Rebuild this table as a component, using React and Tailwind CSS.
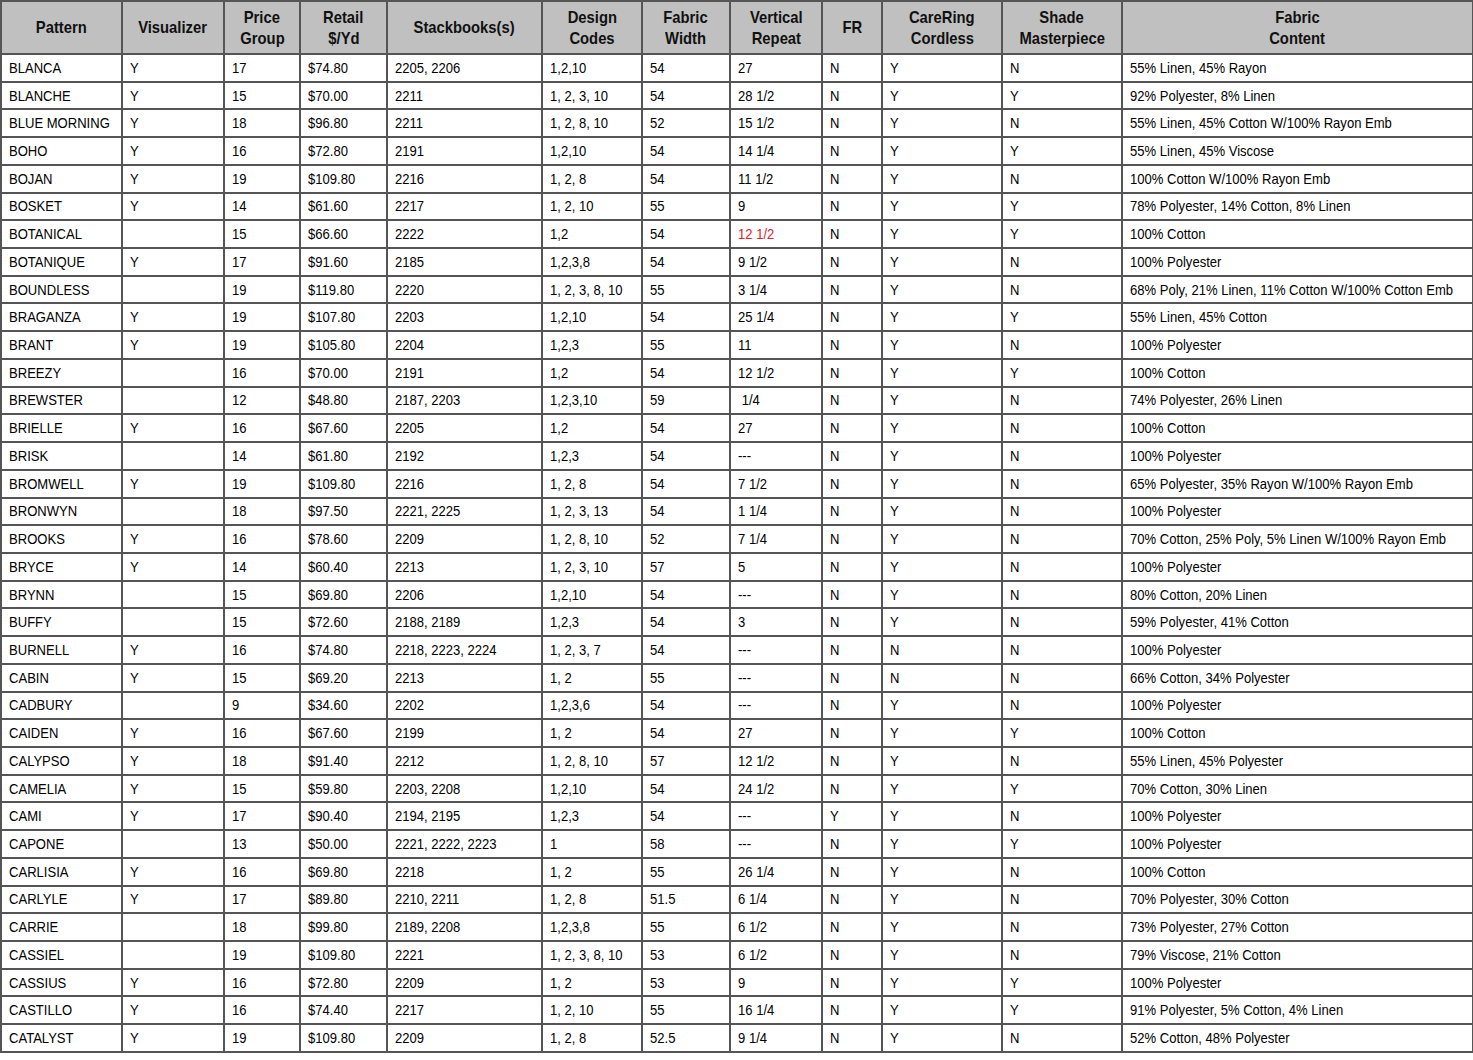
const columns = [
  { label: ['Pattern'], w: 'w-[121px]' },
  { label: ['Visualizer'], w: 'w-[102px]' },
  { label: ['Price', 'Group'], w: 'w-[76px]' },
  { label: ['Retail', '$/Yd'], w: 'w-[87px]' },
  { label: ['Stackbooks(s)'], w: 'w-[155px]' },
  { label: ['Design', 'Codes'], w: 'w-[100px]' },
  { label: ['Fabric', 'Width'], w: 'w-[88px]' },
  { label: ['Vertical', 'Repeat'], w: 'w-[92px]' },
  { label: ['FR'], w: 'w-[60px]' },
  { label: ['CareRing', 'Cordless'], w: 'w-[120px]' },
  { label: ['Shade', 'Masterpiece'], w: 'w-[120px]' },
  { label: ['Fabric', 'Content'], w: 'w-[351px]' },
];

const rows = `BLANCA|Y|17|$74.80|2205, 2206|1,2,10|54|27|N|Y|N|55% Linen, 45% Rayon
BLANCHE|Y|15|$70.00|2211|1, 2, 3, 10|54|28 1/2|N|Y|Y|92% Polyester, 8% Linen
BLUE MORNING|Y|18|$96.80|2211|1, 2, 8, 10|52|15 1/2|N|Y|N|55% Linen, 45% Cotton W/100% Rayon Emb
BOHO|Y|16|$72.80|2191|1,2,10|54|14 1/4|N|Y|Y|55% Linen, 45% Viscose
BOJAN|Y|19|$109.80|2216|1, 2, 8|54|11 1/2|N|Y|N|100% Cotton W/100% Rayon Emb
BOSKET|Y|14|$61.60|2217|1, 2, 10|55|9|N|Y|Y|78% Polyester, 14% Cotton, 8% Linen
BOTANICAL||15|$66.60|2222|1,2|54|12 1/2|N|Y|Y|100% Cotton
BOTANIQUE|Y|17|$91.60|2185|1,2,3,8|54|9 1/2|N|Y|N|100% Polyester
BOUNDLESS||19|$119.80|2220|1, 2, 3, 8, 10|55|3 1/4|N|Y|N|68% Poly, 21% Linen, 11% Cotton W/100% Cotton Emb
BRAGANZA|Y|19|$107.80|2203|1,2,10|54|25 1/4|N|Y|Y|55% Linen, 45% Cotton
BRANT|Y|19|$105.80|2204|1,2,3|55|11|N|Y|N|100% Polyester
BREEZY||16|$70.00|2191|1,2|54|12 1/2|N|Y|Y|100% Cotton
BREWSTER||12|$48.80|2187, 2203|1,2,3,10|59|\u00a01/4|N|Y|N|74% Polyester, 26% Linen
BRIELLE|Y|16|$67.60|2205|1,2|54|27|N|Y|N|100% Cotton
BRISK||14|$61.80|2192|1,2,3|54|---|N|Y|N|100% Polyester
BROMWELL|Y|19|$109.80|2216|1, 2, 8|54|7 1/2|N|Y|N|65% Polyester, 35% Rayon W/100% Rayon Emb
BRONWYN||18|$97.50|2221, 2225|1, 2, 3, 13|54|1 1/4|N|Y|N|100% Polyester
BROOKS|Y|16|$78.60|2209|1, 2, 8, 10|52|7 1/4|N|Y|N|70% Cotton, 25% Poly, 5% Linen W/100% Rayon Emb
BRYCE|Y|14|$60.40|2213|1, 2, 3, 10|57|5|N|Y|N|100% Polyester
BRYNN||15|$69.80|2206|1,2,10|54|---|N|Y|N|80% Cotton, 20% Linen
BUFFY||15|$72.60|2188, 2189|1,2,3|54|3|N|Y|N|59% Polyester, 41% Cotton
BURNELL|Y|16|$74.80|2218, 2223, 2224|1, 2, 3, 7|54|---|N|N|N|100% Polyester
CABIN|Y|15|$69.20|2213|1, 2|55|---|N|N|N|66% Cotton, 34% Polyester
CADBURY||9|$34.60|2202|1,2,3,6|54|---|N|Y|N|100% Polyester
CAIDEN|Y|16|$67.60|2199|1, 2|54|27|N|Y|Y|100% Cotton
CALYPSO|Y|18|$91.40|2212|1, 2, 8, 10|57|12 1/2|N|Y|N|55% Linen, 45% Polyester
CAMELIA|Y|15|$59.80|2203, 2208|1,2,10|54|24 1/2|N|Y|Y|70% Cotton, 30% Linen
CAMI|Y|17|$90.40|2194, 2195|1,2,3|54|---|Y|Y|N|100% Polyester
CAPONE||13|$50.00|2221, 2222, 2223|1|58|---|N|Y|Y|100% Polyester
CARLISIA|Y|16|$69.80|2218|1, 2|55|26 1/4|N|Y|N|100% Cotton
CARLYLE|Y|17|$89.80|2210, 2211|1, 2, 8|51.5|6 1/4|N|Y|N|70% Polyester, 30% Cotton
CARRIE||18|$99.80|2189, 2208|1,2,3,8|55|6 1/2|N|Y|N|73% Polyester, 27% Cotton
CASSIEL||19|$109.80|2221|1, 2, 3, 8, 10|53|6 1/2|N|Y|N|79% Viscose, 21% Cotton
CASSIUS|Y|16|$72.80|2209|1, 2|53|9|N|Y|Y|100% Polyester
CASTILLO|Y|16|$74.40|2217|1, 2, 10|55|16 1/4|N|Y|Y|91% Polyester, 5% Cotton, 4% Linen
CATALYST|Y|19|$109.80|2209|1, 2, 8|52.5|9 1/4|N|Y|N|52% Cotton, 48% Polyester`
  .split('\n')
  .map((line) => line.split('|'));

// Arial Narrow look: Liberation Sans squeezed horizontally
export default function App() {
  return (
    <div className="bg-white w-[1473px] h-[1060px] overflow-hidden font-['Liberation_Sans',Arial,sans-serif]">
      <table className="table-fixed border-collapse w-[1473px] text-black">
        <thead>
          <tr className="bg-[#c0c0c0] h-[53px]">
            {columns.map((col) => (
              <th
                key={col.label.join(' ')}
                className={`${col.w} border-2 border-[#555] text-center align-middle font-bold text-[17px] leading-[21px] text-[#111] whitespace-nowrap`}
              >
                {col.label.map((l) => (
                  <div key={l}>
                    <span className="inline-block scale-x-[0.87] origin-center">{l}</span>
                  </div>
                ))}
              </th>
            ))}
          </tr>
        </thead>
        <tbody>
          {rows.map((row) => (
            <tr key={row[0]} className="h-[27.72px]">
              {row.map((cell, i) => (
                <td
                  key={i}
                  className={`border-2 border-[#555] pl-[7px] pr-0 py-0 text-[15px] leading-[18px] whitespace-nowrap ${
                    row[0] === 'BOTANICAL' && i === 7 ? 'text-[#e0202a]' : 'text-black'
                  }`}
                >
                  <span className="inline-block scale-x-[0.87] origin-left">{cell}</span>
                </td>
              ))}
            </tr>
          ))}
        </tbody>
      </table>
    </div>
  );
}
